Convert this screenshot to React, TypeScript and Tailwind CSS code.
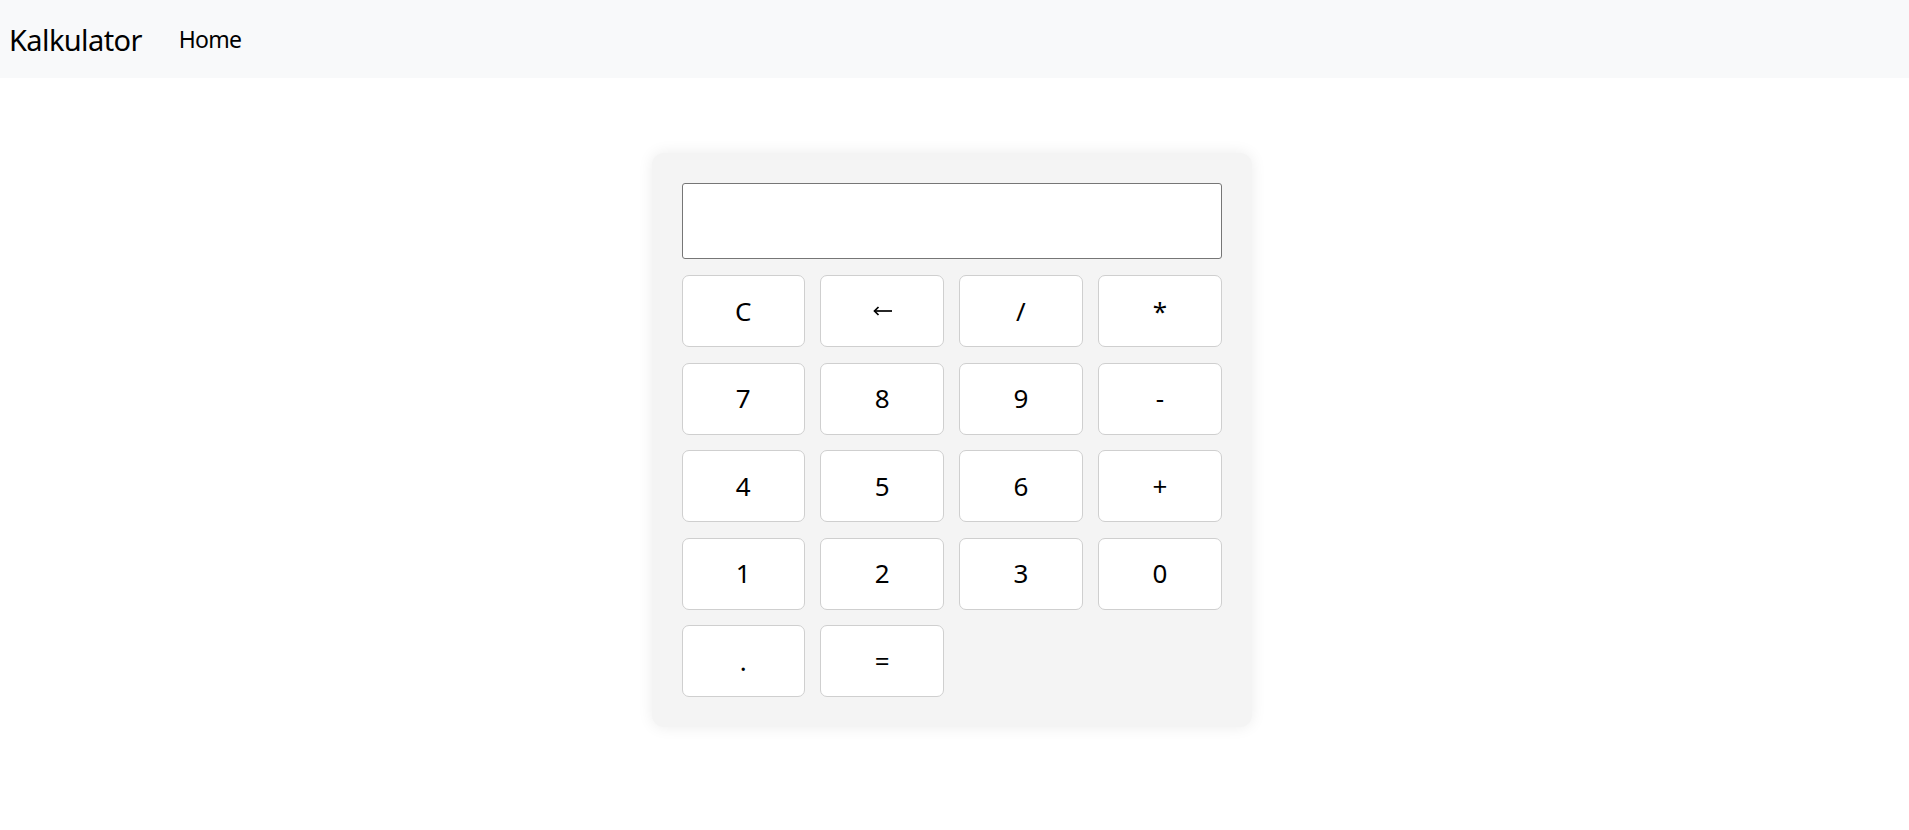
import { useState } from 'react';

const KEYS = ['C', '←', '/', '*', '7', '8', '9', '-', '4', '5', '6', '+', '1', '2', '3', '0', '.', '='];

function BackArrow() {
  return (
    <svg width="19" height="10" viewBox="0 0 19 10" fill="none" stroke="currentColor" strokeWidth="1.7" aria-hidden>
      <path d="M1.5 5H19" />
      <path d="M5.5 1L1.5 5L5.5 9" strokeLinejoin="miter" />
    </svg>
  );
}

export default function App() {
  const [value, setValue] = useState('');

  const press = (k: string) => {
    if (k === 'C') return setValue('');
    if (k === '←') return setValue((v) => v.slice(0, -1));
    if (k === '=') {
      try {
        // eslint-disable-next-line no-new-func
        const out = Function(`"use strict"; return (${value || '0'})`)();
        setValue(String(out));
      } catch {
        setValue('Error');
      }
      return;
    }
    setValue((v) => v + k);
  };

  return (
    <div className="min-h-[830px] bg-white font-['Segoe_UI','Noto_Sans','Open_Sans',sans-serif] text-black">
      <nav className="flex h-[78px] items-center bg-[#f8f9fa] px-[9px]">
        <span className="text-[29px] leading-none tracking-[-0.6px]">Kalkulator</span>
        <a href="#" className="ml-[37px] text-[23px] leading-none tracking-[-0.8px]">
          Home
        </a>
      </nav>

      <div className="mx-auto mt-[75px] w-[600px] -translate-x-[3px] rounded-[12px] bg-[#f4f4f4] p-[30px] shadow-[0_0_15px_rgba(0,0,0,0.08)]">
        <input
          type="text"
          readOnly
          value={value}
          className="mb-[16px] h-[76px] w-full rounded-[3px] border border-[#767676] bg-white px-3 text-right text-[30px] outline-none"
        />
        <div className="grid grid-cols-4 gap-[15.5px]">
          {KEYS.map((k) => (
            <button
              key={k}
              type="button"
              aria-label={k === '←' ? 'Backspace' : undefined}
              onClick={() => press(k)}
              className="flex h-[72px] items-center justify-center rounded-[7px] border border-[#cfcfcf] bg-white text-[26px] hover:bg-gray-50"
            >
              {k === '←' ? <BackArrow /> : k}
            </button>
          ))}
        </div>
      </div>
    </div>
  );
}
